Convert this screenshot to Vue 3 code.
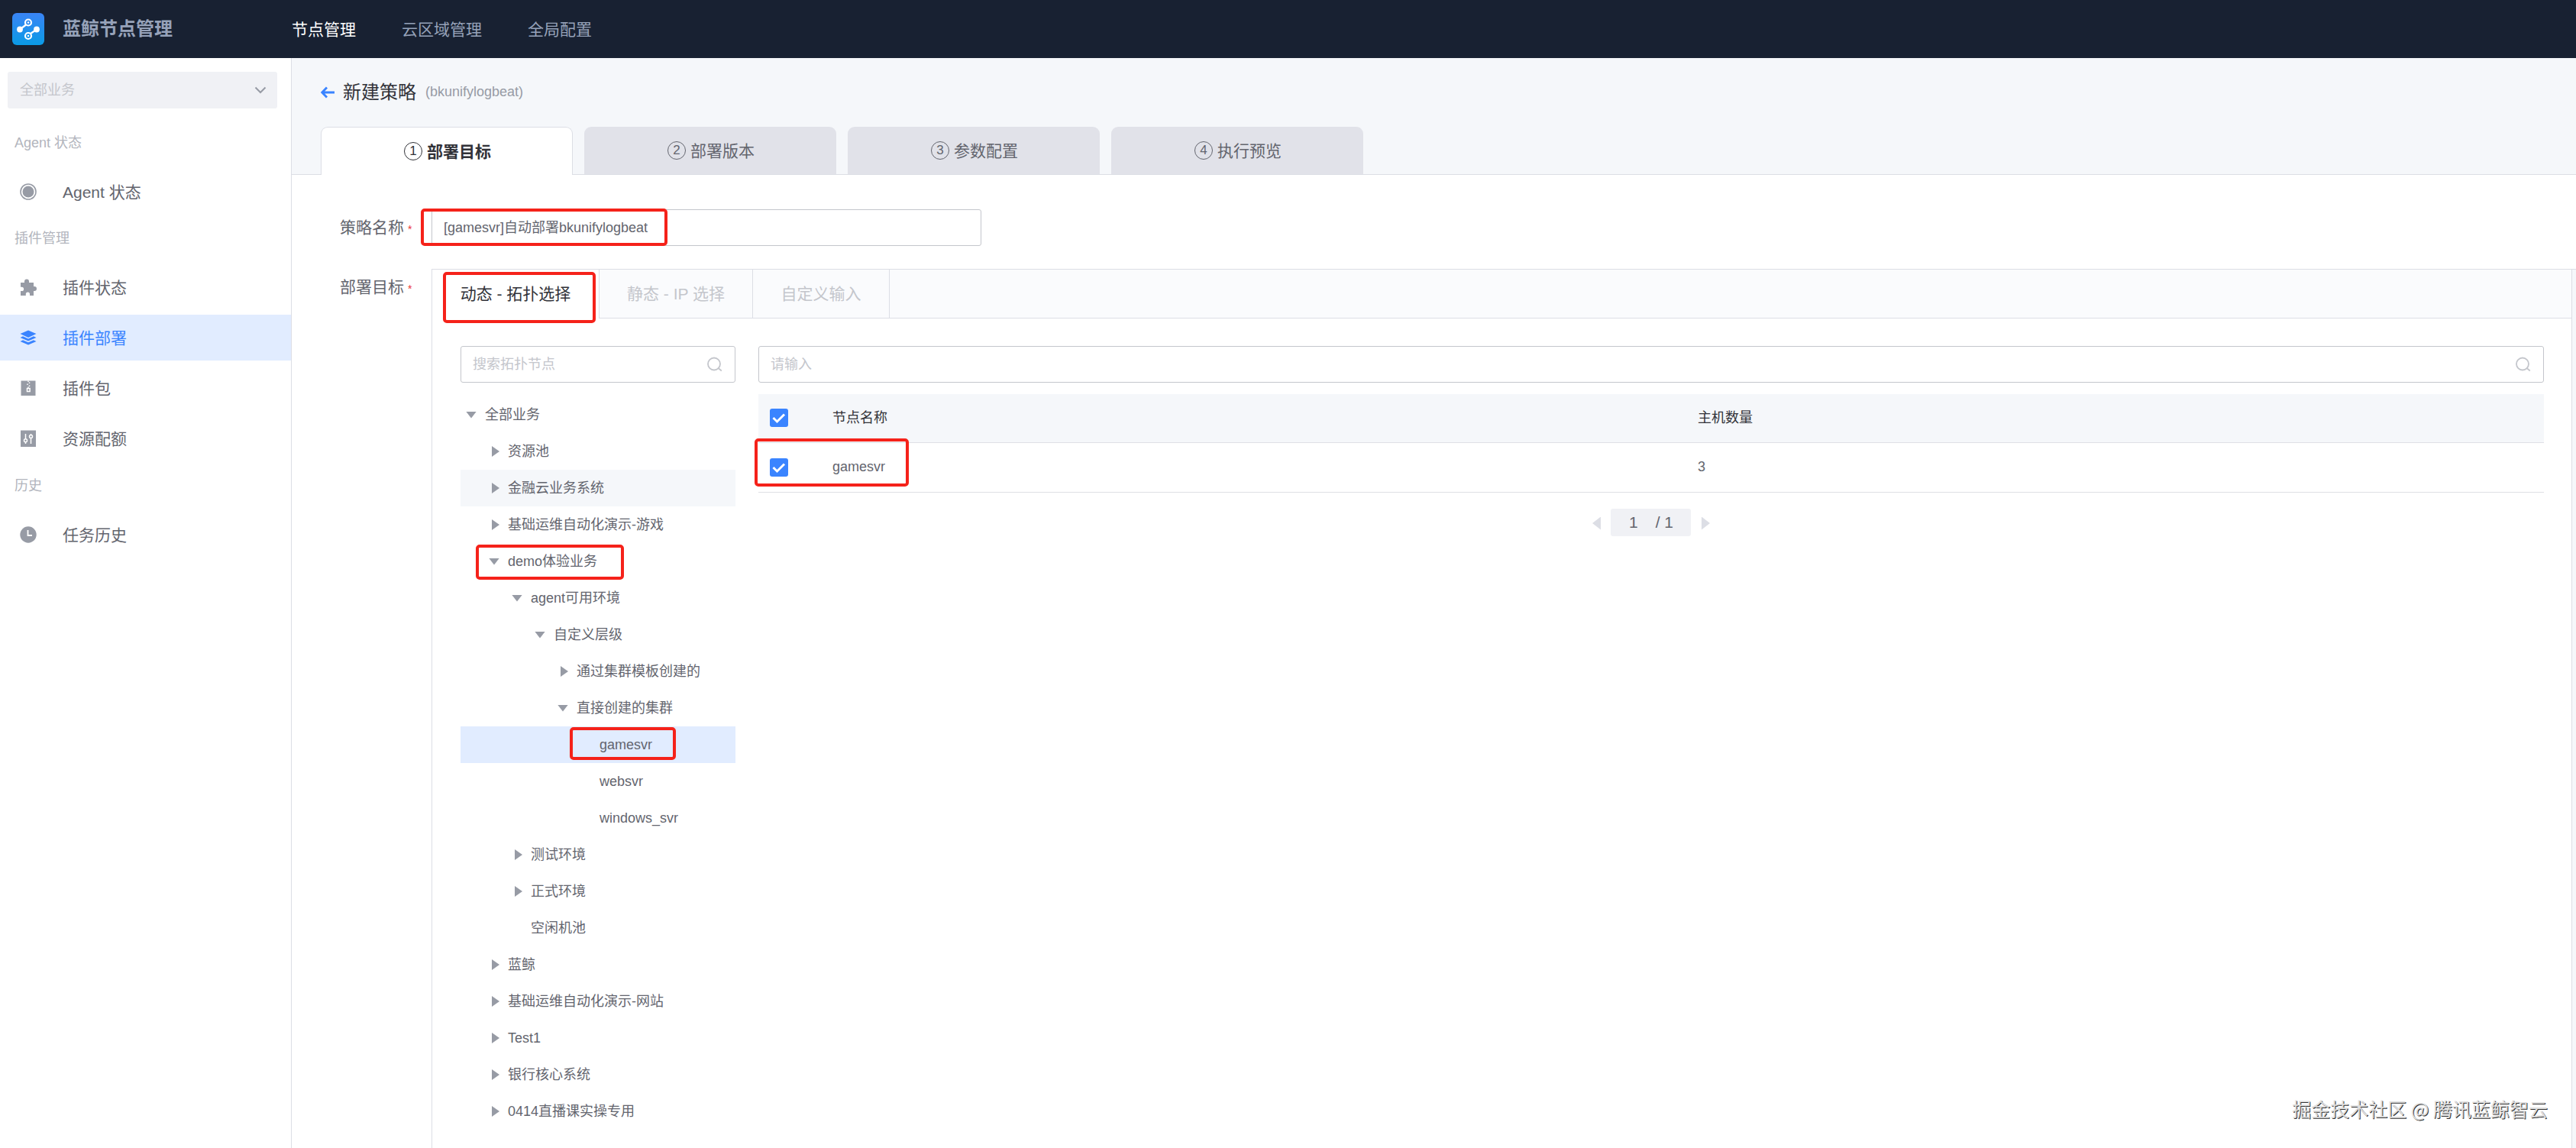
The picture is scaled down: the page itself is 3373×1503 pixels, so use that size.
<template>
  <div class="app">
    <header class="header">
      <div class="brand">
        <svg class="logo" viewBox="0 0 42 42">
          <defs>
            <linearGradient id="logo-bg" x1="0" y1="0" x2="0" y2="1">
              <stop offset="0" stop-color="#3a84f5" />
              <stop offset="1" stop-color="#0a9be6" />
            </linearGradient>
          </defs>
          <rect width="42" height="42" rx="6" fill="url(#logo-bg)" />
          <g stroke="#fff" stroke-width="2.2" fill="none">
            <path d="M10 21.5 18 15.5M32 21.5 24 27" />
            <circle cx="21" cy="12.5" r="4" />
            <circle cx="21" cy="30" r="4" />
          </g>
          <g fill="#fff">
            <circle cx="10" cy="21.5" r="3.9" />
            <circle cx="32" cy="21.5" r="3.9" />
            <circle cx="21" cy="12.5" r="1.2" />
            <circle cx="21" cy="30" r="1.2" />
          </g>
        </svg>
        <span class="brand-name">蓝鲸节点管理</span>
      </div>
      <nav class="top-nav">
        <a v-for="(nav, i) in navs" :key="nav" :class="{ active: i === 0 }">{{ nav }}</a>
      </nav>
    </header>

    <div class="body">
      <aside class="sidebar">
        <div class="biz-select">
          <span>全部业务</span>
          <svg class="chevron" viewBox="0 0 16 10"><path d="M1.5 1.5 8 8l6.5-6.5" /></svg>
        </div>
        <div v-for="group in menus" :key="group.title" class="menu-group">
          <div class="menu-title">{{ group.title }}</div>
          <div
            v-for="item in group.items"
            :key="item.name"
            class="menu-item"
            :class="{ active: item.name === activeMenu }"
          >
            <svg class="menu-icon" viewBox="0 0 22 22">
              <template v-if="item.icon === 'agent'">
                <circle cx="11" cy="11" r="10" fill="none" stroke="currentColor" stroke-width="1.6" />
                <circle cx="11" cy="11" r="7.5" />
              </template>
              <path
                v-else-if="item.icon === 'plugin'"
                d="M1 5h5V3.5a3 3 0 0 1 6 0V5h6v5h1a3 3 0 0 1 0 6h-1v6h-5v-2a2.6 2.6 0 0 0-5.2 0v2H1v-6h1.5a2.6 2.6 0 0 0 0-5.2H1z"
              />
              <template v-else-if="item.icon === 'deploy'">
                <path d="M11 1.5 21.5 6 11 11 .5 6z" />
                <path d="M.5 11 4 9.3 11 12.6l7-3.3 3.5 1.7L18 12.6 11 15.5 4 12.6z" />
                <path d="m.5 16 3.5-1.7 7 3 7-3 3.5 1.7L11 20.5z" />
              </template>
              <template v-else-if="item.icon === 'package'">
                <rect x="1.5" y="1.5" width="19" height="19.5" />
                <g class="cutout">
                  <path d="M11 1.5v1.6M12.5 3.5v1.6M10 5.5v1.6M12.5 7.5v1.6M11 9.5v1.5" />
                  <rect x="9.5" y="11.5" width="3.6" height="4" />
                </g>
              </template>
              <template v-else-if="item.icon === 'quota'">
                <rect x="1" y="0.5" width="20" height="21.5" />
                <g class="cutout">
                  <path d="M7.5 5v7M7.5 16v2M14.5 5v1.5M14.5 10.5V18" />
                  <circle cx="7.5" cy="13.8" r="2" />
                  <circle cx="14.5" cy="8.5" r="2" />
                </g>
              </template>
              <template v-else>
                <circle cx="11" cy="11" r="10.7" />
                <path class="hands" d="M10.5 5v7H16" />
              </template>
            </svg>
            <span>{{ item.name }}</span>
          </div>
        </div>
      </aside>

      <main class="main">
        <div class="page-head">
          <div class="page-title">
            <svg class="back" viewBox="0 0 18 16"><path d="M8 1.5 1.8 8 8 14.5M2 8h16" /></svg>
            <h1>新建策略</h1>
            <span class="sub">(bkunifylogbeat)</span>
          </div>
          <div class="steps">
            <div v-for="(step, i) in steps" :key="step" class="step" :class="{ active: i === 0 }">
              <i class="step-num">{{ i + 1 }}</i>
              <span>{{ step }}</span>
            </div>
          </div>
        </div>

        <div class="form">
          <div class="form-row name-row">
            <label class="form-label">策略名称<em>*</em></label>
            <div class="input name-input">
              <span class="value">[gamesvr]自动部署bkunifylogbeat</span>
              <b class="mark mark-name"></b>
            </div>
          </div>

          <div class="form-row target-row">
            <label class="form-label">部署目标<em>*</em></label>
            <div class="panel">
              <div class="panel-tabs">
                <div class="panel-tab active">动态 - 拓扑选择<b class="mark mark-tab"></b></div>
                <div class="panel-tab">静态 - IP 选择</div>
                <div class="panel-tab">自定义输入</div>
                <div class="panel-tab-rest"></div>
              </div>
              <div class="panel-body">
                <div class="topo">
                  <div class="input">
                    <span>搜索拓扑节点</span>
                    <svg class="search" viewBox="0 0 20 20"><circle cx="9" cy="9.5" r="8" /><path d="M14 14.5 18.8 18.5" /></svg>
                  </div>
                  <ul class="tree">
                    <li
                      v-for="(node, i) in tree"
                      :key="i"
                      class="node"
                      :class="{ hover: node.hover, selected: node.selected }"
                      :style="{ paddingLeft: 7 + node.level * 30 + 'px' }"
                    >
                      <i class="arrow" :class="node.state"></i>
                      <span>{{ node.name }}</span>
                      <b v-if="node.mark" class="mark" :class="node.mark"></b>
                    </li>
                  </ul>
                </div>

                <div class="result">
                  <div class="input">
                    <span>请输入</span>
                    <svg class="search" viewBox="0 0 20 20"><circle cx="9" cy="9.5" r="8" /><path d="M14 14.5 18.8 18.5" /></svg>
                  </div>
                  <div class="table">
                    <div class="tr th">
                      <i class="checkbox"><svg viewBox="0 0 24 24"><path d="m4.5 12 5 5L19 7.5" /></svg></i>
                      <span>节点名称</span>
                      <span>主机数量</span>
                    </div>
                    <div class="tr">
                      <i class="checkbox"><svg viewBox="0 0 24 24"><path d="m4.5 12 5 5L19 7.5" /></svg></i>
                      <span>gamesvr</span>
                      <span>3</span>
                      <b class="mark mark-row"></b>
                    </div>
                  </div>
                  <div class="pager">
                    <i class="prev"></i>
                    <div class="pages"><span>1</span><span>/ 1</span></div>
                    <i class="next"></i>
                  </div>
                </div>
              </div>
            </div>
          </div>
        </div>
      </main>
    </div>
    <div class="watermark">掘金技术社区 @ 腾讯蓝鲸智云</div>
  </div>
</template>

<script setup>
import { ref } from 'vue'

const navs = ['节点管理', '云区域管理', '全局配置']
const steps = ['部署目标', '部署版本', '参数配置', '执行预览']
const activeMenu = ref('插件部署')

const menus = [
  { title: 'Agent 状态', items: [{ name: 'Agent 状态', icon: 'agent' }] },
  {
    title: '插件管理',
    items: [
      { name: '插件状态', icon: 'plugin' },
      { name: '插件部署', icon: 'deploy' },
      { name: '插件包', icon: 'package' },
      { name: '资源配额', icon: 'quota' }
    ]
  },
  { title: '历史', items: [{ name: '任务历史', icon: 'history' }] }
]

// flattened topology tree, level drives the indent
const tree = ref([
  { name: '全部业务', level: 0, state: 'open' },
  { name: '资源池', level: 1, state: 'closed' },
  { name: '金融云业务系统', level: 1, state: 'closed', hover: true },
  { name: '基础运维自动化演示-游戏', level: 1, state: 'closed' },
  { name: 'demo体验业务', level: 1, state: 'open', mark: 'mark-demo' },
  { name: 'agent可用环境', level: 2, state: 'open' },
  { name: '自定义层级', level: 3, state: 'open' },
  { name: '通过集群模板创建的', level: 4, state: 'closed' },
  { name: '直接创建的集群', level: 4, state: 'open' },
  { name: 'gamesvr', level: 5, state: 'leaf', selected: true, mark: 'mark-leaf' },
  { name: 'websvr', level: 5, state: 'leaf' },
  { name: 'windows_svr', level: 5, state: 'leaf' },
  { name: '测试环境', level: 2, state: 'closed' },
  { name: '正式环境', level: 2, state: 'closed' },
  { name: '空闲机池', level: 2, state: 'leaf' },
  { name: '蓝鲸', level: 1, state: 'closed' },
  { name: '基础运维自动化演示-网站', level: 1, state: 'closed' },
  { name: 'Test1', level: 1, state: 'closed' },
  { name: '银行核心系统', level: 1, state: 'closed' },
  { name: '0414直播课实操专用', level: 1, state: 'closed' }
])
</script>

<style>
body {
  margin: 0;
}
</style>

<style scoped>
.app {
  position: relative;
  display: flex;
  flex-direction: column;
  height: 1503px;
  overflow: hidden;
  background: #fff;
  color: #63656e;
  font-family: "Liberation Sans", "Noto Sans CJK SC", sans-serif;
  font-size: 18px;
  line-height: 1.3;
}

.header {
  display: flex;
  align-items: center;
  flex: none;
  height: 76px;
  background: #182132;
}

.brand {
  display: flex;
  align-items: center;
  width: 366px;
  padding-left: 16px;
}

.logo {
  width: 42px;
  height: 42px;
  margin-right: 24px;
}

.brand-name {
  color: #96a2b9;
  font-size: 24px;
  font-weight: 700;
}

.top-nav {
  display: flex;
  gap: 60px;
  padding-top: 2px;
  font-size: 21px;
  color: #96a2b9;
}

.top-nav .active {
  color: #fff;
}

.body {
  display: flex;
  flex: 1;
  min-height: 0;
}

/* optical centring of the row labels */
.biz-select span,
.menu-item span,
.step span,
.input span,
.node span,
.th span {
  padding-top: 2px;
}

.sidebar {
  flex: none;
  box-sizing: border-box;
  width: 382px;
  padding-top: 18px;
  border-right: 1px solid #dcdee5;
}

.biz-select {
  display: flex;
  align-items: center;
  justify-content: space-between;
  box-sizing: border-box;
  width: 353px;
  height: 48px;
  margin: 0 0 20px 10px;
  padding: 0 14px 0 16px;
  border-radius: 3px;
  background: #f0f1f5;
  color: #c4c6cc;
}

.chevron {
  width: 16px;
  height: 10px;
  fill: none;
  stroke: #979ba5;
  stroke-width: 2;
}

.menu-title {
  height: 48px;
  padding-left: 19px;
  line-height: 51px;
  color: #b2b5bd;
}

.menu-group:last-child {
  padding-top: 1px;
}

.menu-title + .menu-item {
  margin-top: 11px;
}

.menu-item {
  display: flex;
  align-items: center;
  height: 60px;
  margin-bottom: 6px;
  padding-left: 26px;
  font-size: 21px;
}

.menu-icon {
  width: 22px;
  height: 22px;
  margin-right: 34px;
  color: #979ba5;
  fill: currentColor;
}

.menu-item.active {
  background: #e1ecff;
  color: #3a84ff;
}

.menu-item.active .menu-icon {
  color: #3a84ff;
}

.cutout {
  fill: none;
  stroke: #fff;
  stroke-width: 1.5;
}

.hands {
  fill: none;
  stroke: #fff;
  stroke-width: 1.8;
}

.main {
  display: flex;
  flex-direction: column;
  flex: 1;
  min-width: 0;
}

.page-head {
  flex: none;
  box-sizing: border-box;
  height: 153px;
  padding-left: 38px;
  border-bottom: 1px solid #dcdee5;
  background: #f5f7fa;
}

.page-title {
  display: flex;
  align-items: center;
  height: 90px;
}

.back {
  width: 18px;
  height: 16px;
  margin-right: 11px;
  fill: none;
  stroke: #3a84ff;
  stroke-width: 2.8;
}

h1 {
  margin: 0 12px 0 0;
  color: #313238;
  font-size: 24px;
  font-weight: 400;
}

.sub {
  color: #979ba5;
}

.steps {
  display: flex;
  gap: 15px;
}

.step {
  display: flex;
  align-items: center;
  justify-content: center;
  gap: 6px;
  box-sizing: border-box;
  width: 330px;
  height: 62px;
  padding-left: 2px;
  border-radius: 9px 9px 0 0;
  background: #e1e2e9;
  font-size: 21px;
}

.step.active {
  height: 63px;
  border: 1px solid #dcdee5;
  border-bottom: none;
  background: #fff;
  color: #313238;
  font-weight: 700;
}

.step-num {
  box-sizing: border-box;
  width: 24px;
  height: 24px;
  border: 1px solid currentColor;
  border-radius: 50%;
  font-size: 17px;
  font-style: normal;
  font-weight: 400;
  line-height: 22px;
  text-align: center;
}

.form {
  display: flex;
  flex-direction: column;
  flex: 1;
  padding-top: 45px;
}

.form-row {
  display: flex;
}

.name-row {
  margin-bottom: 30px;
}

.target-row {
  flex: 1;
}

.form-label {
  flex: none;
  box-sizing: border-box;
  width: 183px;
  height: 48px;
  padding-left: 63px;
  font-size: 21px;
  line-height: 48px;
}

.form-label em {
  margin-left: 5px;
  color: #ea3636;
  font-size: 14px;
  font-style: normal;
}

.input {
  position: relative;
  display: flex;
  align-items: center;
  justify-content: space-between;
  box-sizing: border-box;
  height: 48px;
  padding: 0 16px 0 15px;
  border: 1px solid #c4c6cc;
  border-radius: 3px;
  color: #c4c6cc;
}

.name-input {
  width: 720px;
}

.value {
  color: #63656e;
}

.search {
  width: 20px;
  height: 20px;
  fill: none;
  stroke: #c4c6cc;
  stroke-width: 1.8;
}

.panel {
  display: flex;
  flex-direction: column;
  flex: 1;
  border: solid #dcdee5;
  border-width: 1px 0 0 1px;
}

.target-row::after {
  content: "";
  width: 5px;
  border-top: 1px solid #dcdee5;
  border-left: 1px solid #dcdee5;
  background: #f5f7fa;
}

.panel-tabs {
  display: flex;
  height: 64px;
  font-size: 21px;
  line-height: 64px;
}

.panel-tab {
  position: relative;
  box-sizing: border-box;
  width: 201px;
  border: solid #dcdee5;
  border-width: 0 1px 1px 0;
  background: #fafbfd;
  color: #c4c6cc;
  text-align: center;
}

.panel-tab.active {
  width: 219px;
  border-bottom: none;
  background: #fff;
  color: #313238;
}

.panel-tab:nth-child(3) {
  width: 179px;
}

.panel-tab-rest {
  flex: 1;
  border-bottom: 1px solid #dcdee5;
  background: #fafbfd;
}

.panel-body {
  display: flex;
  gap: 30px;
  padding: 36px 36px 0 37px;
}

.topo {
  flex: none;
  width: 360px;
}

.tree {
  margin: 18px 0 0;
  padding: 0;
  list-style: none;
}

.node {
  position: relative;
  display: flex;
  align-items: center;
  box-sizing: border-box;
  height: 48px;
}

.node.hover {
  background: #f5f7fa;
}

.node.selected {
  background: #e1ecff;
}

.arrow {
  box-sizing: border-box;
  width: 14px;
  height: 9px;
  margin-right: 11px;
  background: #979ba5;
  clip-path: polygon(0 0, 100% 0, 50% 100%);
}

.arrow.closed {
  width: 10px;
  height: 14px;
  margin-left: 4px;
  clip-path: polygon(0 0, 100% 50%, 0 100%);
}

.arrow.leaf {
  background: none;
}

.result {
  flex: 1;
  min-width: 0;
}

.table {
  margin-top: 15px;
}

.tr {
  position: relative;
  display: grid;
  grid-template-columns: 97px 1133px 1fr;
  align-items: center;
  box-sizing: border-box;
  height: 65px;
  border-bottom: 1px solid #dfe0e5;
}

.th {
  height: 64px;
  padding-bottom: 1px;
  background: #f5f7fa;
  color: #313238;
}

.checkbox {
  display: flex;
  width: 24px;
  height: 24px;
  margin-left: 15px;
  border-radius: 3px;
  background: #3a84ff;
}

.checkbox svg {
  fill: none;
  stroke: #fff;
  stroke-width: 3;
}

.pager {
  display: flex;
  align-items: center;
  margin: 21px 0 0 1092px;
}

.pages {
  display: flex;
  align-items: center;
  box-sizing: border-box;
  width: 105px;
  height: 36px;
  margin: 0 14px 0 13px;
  padding-left: 24px;
  gap: 23px;
  border-radius: 3px;
  background: #f0f1f5;
  font-size: 21px;
}

.prev,
.next {
  width: 11px;
  height: 17px;
  margin-top: 2px;
  background: #dcdee5;
  clip-path: polygon(0 50%, 100% 0, 100% 100%);
}

.next {
  clip-path: polygon(0 0, 100% 50%, 0 100%);
}

/* red annotation frames laid over the controls */
.mark {
  position: absolute;
  box-sizing: border-box;
  border: 4px solid #f5221a;
  border-radius: 5px;
}

.mark-name {
  top: -2px;
  left: -15px;
  width: 323px;
  height: 49px;
}

.mark-tab {
  top: 3px;
  left: 14px;
  width: 200px;
  height: 67px;
  z-index: 1;
}

.mark-demo {
  top: 2px;
  left: 20px;
  width: 194px;
  height: 46px;
}

.mark-leaf {
  top: 1px;
  left: 143px;
  width: 139px;
  height: 43px;
}

.mark-row {
  top: -6px;
  left: -5px;
  width: 202px;
  height: 63px;
}

.watermark {
  position: absolute;
  right: 37px;
  bottom: 36px;
  color: #dedede;
  font-family: "Noto Sans CJK SC", sans-serif;
  font-size: 25px;
  text-shadow: 1px 1px 0 #333;
}
</style>
